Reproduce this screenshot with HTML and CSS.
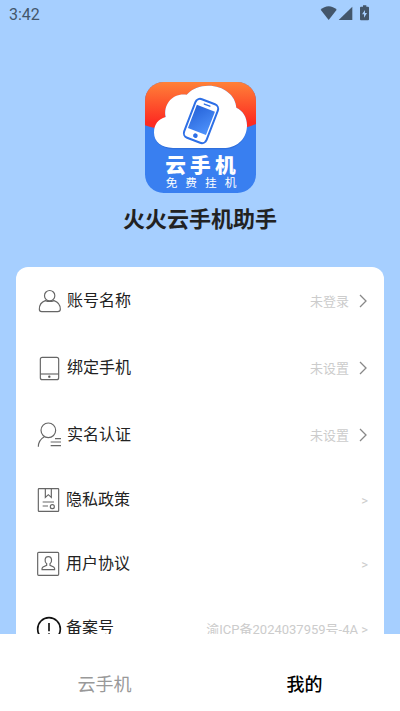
FILE: index.html
```html
<!DOCTYPE html>
<html lang="zh-CN">
<head>
<meta charset="utf-8">
<meta name="viewport" content="width=device-width, initial-scale=1">
<title>我的</title>
<link rel="stylesheet" href="styles.css">
</head>
<body>
<div class="app">
  <header class="status">
    <span>3:42</span>
    <svg class="status-icons" viewBox="960 12 150 51" aria-hidden="true">
      <path d="M962 29C975 15 997 15 1010 29L986 60Z"/>
      <path d="M1057 20V60H1016Z"/>
      <path fill-rule="evenodd" d="M1089 16H1099V20H1104Q1107 20 1107 23V58Q1107 61 1104 61H1083Q1080 61 1080 58V23Q1080 20 1083 20H1089ZM1095 30L1086 43H1092V53L1101 39H1095Z"/>
    </svg>
  </header>
  <main class="page">
    <section class="brand">
      <svg class="logo" viewBox="28 22 333 333" role="img" aria-label="云手机 免费挂机">
        <defs>
          <linearGradient id="fire" x1="0" y1="0" x2="0" y2="1"><stop offset="0" stop-color="#ff8138"/><stop offset=".85" stop-color="#fd2c22"/></linearGradient>
          <linearGradient id="screen" x1="0" y1="0" x2="1" y2="1"><stop offset="0" stop-color="#2562d8"/><stop offset="1" stop-color="#4f93fc"/></linearGradient>
          <clipPath id="tile"><rect x="28" y="22" width="333" height="333" rx="56"/></clipPath>
        </defs>
        <g clip-path="url(#tile)">
          <rect x="28" y="22" width="333" height="333" fill="#397ff0"/>
          <path d="M28 22H361V148Q330 162 290 165H90Q55 162 28 152Z" fill="url(#fire)"/>
          <path d="M112 224C78 222 55 204 55 176C55 150 68 136 90 130C82 90 112 56 153 61C169 42 193 33 218 33C264 33 300 62 302 99C322 108 334 128 334 154C334 192 308 221 270 224Z" fill="#2f6fdc"/>
          <path d="M112 220C78 218 55 202 55 174C55 150 67 133 90 127C82 88 112 54 153 60C169 42 193 33 218 33C264 33 300 62 302 99C322 108 334 128 334 152C334 190 308 217 270 220Z" fill="#fff"/>
          <g transform="rotate(21 196 139)">
            <rect x="160" y="77" width="72" height="124" rx="15" fill="#fff" stroke="#2d6fe6" stroke-width="6"/>
            <rect x="167" y="98" width="58" height="75" fill="url(#screen)"/>
            <path d="M187 88H205" stroke="#2d6fe6" stroke-width="4" stroke-linecap="round"/>
            <circle cx="196" cy="186" r="7" fill="#2d6fe6"/>
          </g>
          <text class="logo-name" x="89 163 238" y="294">云手机</text>
          <text class="logo-note" x="90 149 208 267" y="336">免费挂机</text>
        </g>
      </svg>
      <h1>火火云手机助手</h1>
    </section>
    <section class="card">
      <ul class="account">
        <li><a href="#account">
          <svg class="icon" viewBox="81 86 72 72" aria-hidden="true"><circle cx="119" cy="106" r="15.5"/><path d="M106 121C94 125 88 135 88 147Q88 154 95 154H143Q151 154 151 147C151 135 144 125 132 121Q119 126 106 121Z"/></svg>
          <span class="label">账号名称</span><span class="value">未登录</span>
          <svg class="chevron" viewBox="0 0 8 14" aria-hidden="true"><path d="M1 1L7 7L1 13"/></svg>
        </a></li>
        <li><a href="#phone">
          <svg class="icon" viewBox="81 286 72 72" aria-hidden="true"><rect x="91" y="290" width="55" height="67" rx="6"/><path d="M91 340H146"/><circle class="dot" cx="118" cy="348" r="3.5"/></svg>
          <span class="label">绑定手机</span><span class="value">未设置</span>
          <svg class="chevron" viewBox="0 0 8 14" aria-hidden="true"><path d="M1 1L7 7L1 13"/></svg>
        </a></li>
        <li><a href="#verify">
          <svg class="icon" viewBox="81 38 72 72" aria-hidden="true"><circle cx="115" cy="60" r="22"/><path d="M103 79C91 86 85 94 85 109M135 85H153M122 95H153M122 106H153"/></svg>
          <span class="label">实名认证</span><span class="value">未设置</span>
          <svg class="chevron" viewBox="0 0 8 14" aria-hidden="true"><path d="M1 1L7 7L1 13"/></svg>
        </a></li>
      </ul>
      <ul class="legal">
        <li><a href="#privacy">
          <svg class="icon" viewBox="78 234 72 72" aria-hidden="true"><rect x="85" y="236" width="61" height="68" rx="2"/><path d="M106 236V262L115 254L124 262V236M98 276H132M98 288H114"/><circle cx="127" cy="290" r="6"/></svg>
          <span class="label">隐私政策</span><span class="value">&gt;</span>
        </a></li>
        <li><a href="#terms">
          <svg class="icon" viewBox="78 51 72 72" aria-hidden="true"><rect x="83" y="52" width="63" height="69" rx="3"/><path d="M110 86C103 81 103 65 115 65C127 65 127 81 120 86V91L131 96Q135 99 134 104H96Q95 99 99 96L110 91Z"/></svg>
          <span class="label">用户协议</span><span class="value">&gt;</span>
        </a></li>
        <li><a href="#record">
          <svg class="icon strong" viewBox="78 243 72 72" aria-hidden="true"><circle cx="117" cy="282" r="34"/><path d="M117 264V289M117 295V301"/></svg>
          <span class="label">备案号</span><span class="value">渝ICP备2024037959号-4A &gt;</span>
        </a></li>
      </ul>
    </section>
  </main>
  <nav class="tabs">
    <a href="#cloud-phone">云手机</a>
    <a href="#mine" class="active" aria-current="page">我的</a>
  </nav>
</div>
</body>
</html>
```
FILE: styles.css
```css
* {
  box-sizing: border-box;
}

body {
  margin: 0;
  font-family: Roboto, "Noto Sans CJK SC", sans-serif;
  color: #222;
}

a {
  color: inherit;
  text-decoration: none;
}

.app {
  display: flex;
  flex-direction: column;
  height: 100vh;
  background: #a6cfff;
}

.status {
  display: flex;
  flex: none;
  align-items: center;
  justify-content: space-between;
  height: 28px;
  padding: 0 30px 0 9px;
  font-size: 16px;
  color: #43566b;
}

.status-icons {
  width: 50px;
  height: 17px;
  margin-bottom: 4px;
  fill: #43566b;
}

.page {
  flex: 1;
  min-height: 0;
  overflow-y: auto;
  scrollbar-width: none;
}

.brand {
  display: flex;
  flex-direction: column;
  align-items: center;
  gap: 12px;
  padding: 54px 0 32px;
}

.logo {
  width: 111px;
  height: 111px;
}

.logo-name,
.logo-note {
  font-family: "Noto Sans CJK SC", sans-serif;
  fill: #fff;
}

.logo-name {
  font-size: 62px;
  font-weight: 900;
}

.logo-note {
  font-size: 35px;
}

h1 {
  margin: 0;
  font-size: 22px;
  line-height: 30px;
  font-weight: 700;
}

.card {
  margin: 0 16px;
  background: #fff;
  border-radius: 12px;
}

ul {
  margin: 0;
  padding: 0;
  list-style: none;
}

li a {
  display: flex;
  align-items: center;
  gap: 6px;
}

.account a {
  height: 67px;
  padding: 0 17px 0 21px;
}

.legal a {
  height: 64px;
  padding: 0 16px 0 20px;
}

.icon {
  flex: none;
  width: 24px;
  height: 24px;
  overflow: visible;
  fill: none;
  stroke: #666;
  stroke-width: 3.5;
}

.icon .dot {
  fill: #555;
  stroke: none;
}

.icon.strong {
  stroke: #111;
  stroke-width: 5;
}

.label {
  font-size: 16px;
  line-height: 24px;
}

.value {
  margin-left: auto;
  font-size: 13px;
  color: #ccc;
}

.chevron {
  width: 8px;
  height: 14px;
  margin-left: 4px;
  fill: none;
  stroke: #888;
  stroke-width: 1.3;
}

.tabs {
  display: flex;
  flex: none;
  justify-content: space-around;
  height: 77px;
  background: #fff;
}

.tabs a {
  padding-top: 38px;
  font-size: 18px;
  line-height: 26px;
  color: #999;
}

.tabs .active {
  font-weight: 500;
  color: #000;
}
```
